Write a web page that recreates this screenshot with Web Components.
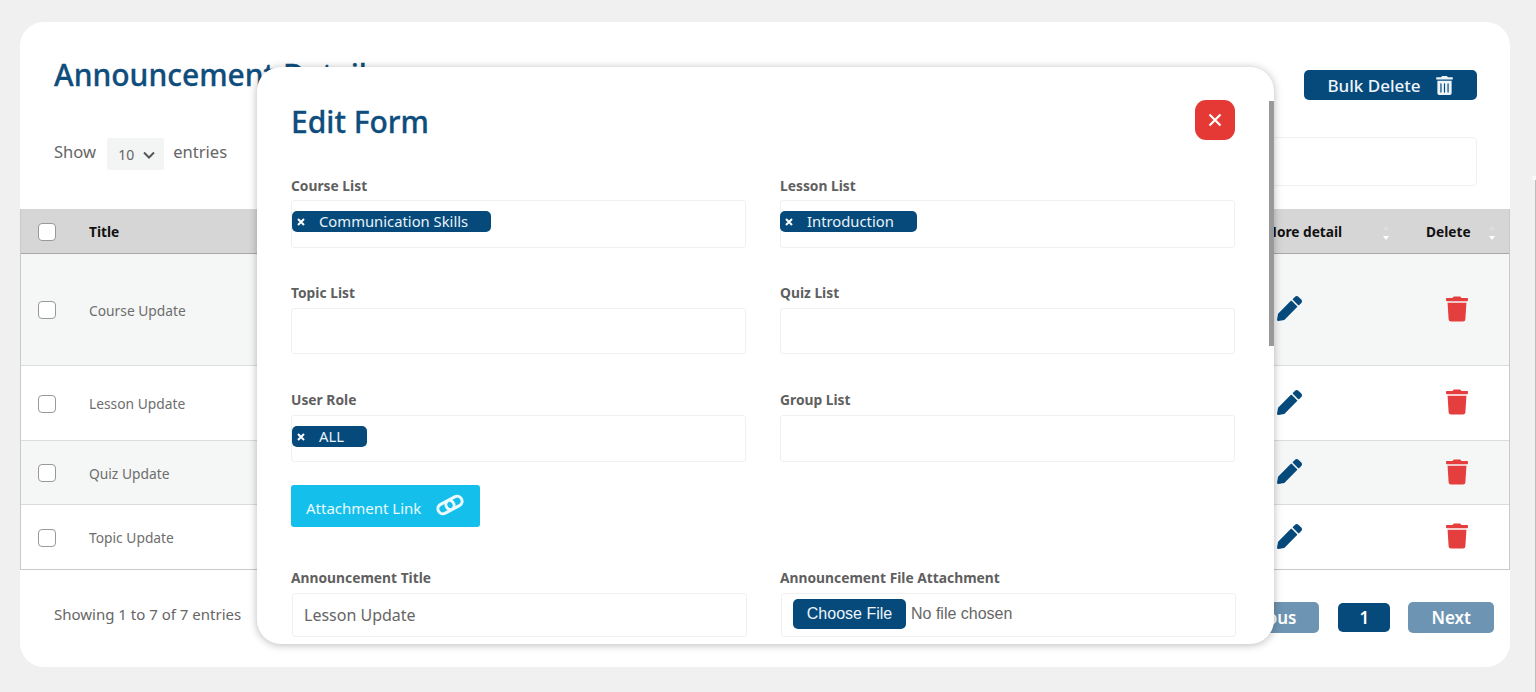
<!DOCTYPE html>
<html lang="en"><head><meta charset="utf-8"><title>Announcement Details</title>
<style>
html,body{margin:0;height:692px;overflow:hidden;background:#f0f0f0;font-family:"Noto Sans","Open Sans",sans-serif}
</style></head><body>
<ann-page>
  <ann-card>
    <ann-toolbar heading="Announcement Details"></ann-toolbar>
    <ann-table>
      <ann-row h="112" shade>Course Update</ann-row>
      <ann-row h="75">Lesson Update</ann-row>
      <ann-row h="64" shade>Quiz Update</ann-row>
      <ann-row h="64">Topic Update</ann-row>
    </ann-table>
    <ann-footer></ann-footer>
  </ann-card>
  <ann-modal heading="Edit Form">
    <ann-field label="Course List" h="48"><ann-chip>Communication Skills</ann-chip></ann-field>
    <ann-field label="Lesson List" h="48"><ann-chip style="margin-left:-1px">Introduction</ann-chip></ann-field>
    <ann-field label="Topic List" h="46" lm="5"></ann-field>
    <ann-field label="Quiz List" h="46" lm="5"></ann-field>
    <ann-field label="User Role" h="47" lm="5" class="r3"><ann-chip>ALL</ann-chip></ann-field>
    <ann-field label="Group List" h="47" lm="5" class="r3"></ann-field>
    <ann-link-button>Attachment Link</ann-link-button>
    <ann-field label="Announcement Title" h="44" lm="5" text="Lesson Update" nudge></ann-field>
    <ann-field label="Announcement File Attachment" h="44" lm="5" nudge><ann-file></ann-file></ann-field>
  </ann-modal>
  <ann-edge></ann-edge>
</ann-page>
<script>
const BLUE='#064a7c';
const TRASH='M432 32H312l-9.4-18.7A24 24 0 0 0 281.1 0H166.8a23.72 23.72 0 0 0-21.4 13.3L136 32H16A16 16 0 0 0 0 48v32a16 16 0 0 0 16 16h416a16 16 0 0 0 16-16V48a16 16 0 0 0-16-16zM53.2 467a48 48 0 0 0 47.9 45h245.8a48 48 0 0 0 47.9-45L416 128H32z';
const TRASH_ALT='M32 464a48 48 0 0 0 48 48h288a48 48 0 0 0 48-48V128H32zm272-256a16 16 0 0 1 32 0v224a16 16 0 0 1-32 0zm-96 0a16 16 0 0 1 32 0v224a16 16 0 0 1-32 0zm-96 0a16 16 0 0 1 32 0v224a16 16 0 0 1-32 0zM432 32H312l-9.4-18.7A24 24 0 0 0 281.1 0H166.8a23.72 23.72 0 0 0-21.4 13.3L136 32H16A16 16 0 0 0 0 48v32a16 16 0 0 0 16 16h416a16 16 0 0 0 16-16V48a16 16 0 0 0-16-16z';
const PEN='M497.9 142.1l-46.1 46.1c-4.7 4.7-12.3 4.7-17 0l-111-111c-4.7-4.7-4.7-12.3 0-17l46.1-46.1c18.7-18.7 49.1-18.7 67.9 0l60.1 60.1c18.8 18.7 18.8 49.1 0 67.9zM284.2 99.8L21.6 362.4.4 483.9c-2.9 16.4 11.4 30.6 27.8 27.8l121.5-21.3 262.6-262.6c4.7-4.7 4.7-12.3 0-17l-111-111c-4.8-4.7-12.4-4.7-17.1 0z';
function def(name,css,html,init){
  customElements.define(name,class extends HTMLElement{
    constructor(){super();this.attachShadow({mode:'open'});}
    connectedCallback(){
      this.shadowRoot.innerHTML='<style>'+css+'</style>'+(typeof html==='function'?html(this):html);
      if(init)init(this);
    }
  });
}
def('ann-page',':host{display:block;position:relative;padding:22px 26px 25px 20px;height:645px}','<slot></slot>');
def('ann-edge',`:host{position:absolute;left:1532px;top:176px;width:4px;height:516px}
.a{height:4px;background:#f8f8f8}.b{margin-left:3px;width:1px;height:512px;background:#bdbdbd}`,'<div class="a"></div><div class="b"></div>');
def('ann-card',':host{display:block;height:645px;background:#fff;border-radius:24px;overflow:hidden}','<slot></slot>');
def('ann-toolbar',`
:host{display:block;padding:31px 33px 23px 34px;color:#666}
.top{display:flex;justify-content:space-between;align-items:flex-start;height:47px;margin-bottom:37px}
h1{margin:0;font:500 30px/44px "Noto Sans",sans-serif;-webkit-text-stroke:.3px #0e4d7c;color:#0e4d7c}
button{all:unset;margin-top:17px;display:flex;align-items:center;justify-content:center;gap:15px;box-sizing:border-box;width:173px;height:30px;padding-right:1px;background:${BLUE};border-radius:5px;color:#eef5fa;font:500 17px "Noto Sans",sans-serif}
button svg{width:17px;height:19px;fill:#eef5fa}
.row{display:flex;justify-content:space-between;align-items:flex-start;height:49px}
.show{display:flex;align-items:flex-start;height:32px;margin-top:1px;font-size:16.6px;line-height:28px}
.sel{display:flex;align-items:center;justify-content:space-between;box-sizing:border-box;width:57px;height:32px;margin:0 9px 0 11px;padding:2px 9px 0 11px;background:#f3f4f4;font-size:14px;border-radius:2px}
.sel svg{width:12px;height:8px;fill:none;stroke:#555;stroke-width:2}
.search{width:260px;height:47px;border:1px solid #f0f0f0;border-radius:4px}
`,e=>`<div class="top"><h1>${e.getAttribute('heading')}</h1><button>Bulk Delete <svg viewBox="0 0 448 512"><path d="${TRASH_ALT}"/></svg></button></div>
<div class="row"><div class="show">Show<span class="sel">10<svg viewBox="0 0 12 8"><path d="M1 1.5l5 5 5-5"/></svg></span>entries</div><div class="search"></div></div>`);
def('ann-sort',`:host{display:flex;flex-direction:column;gap:6px;align-items:center;padding-top:1px}
i{display:block;width:0;height:0;border-left:3px solid transparent;border-right:3px solid transparent}
.u{border-bottom:4px solid #dedede}.d{border-top:4px solid #fff}`,'<i class="u"></i><i class="d"></i>');
def('ann-table',`
:host{display:block;border:solid #c9c9c9;border-width:0 1px 1px;margin:0}
.head{display:grid;grid-template-columns:68px 1175px 144px 1fr;height:44px;background:#d6d6d6;border-bottom:1px solid #a8a8a8;font:700 13.7px/44px "Noto Sans",sans-serif;color:#111}
.head>div{display:flex;align-items:center;padding-top:1px}
.chk{box-sizing:border-box;width:18px;height:18px;margin-left:17px;margin-top:-1px;background:#fff;border:1px solid #999;border-radius:4px}
.more{padding-right:19px;justify-content:space-between}
.del{padding-left:18px;padding-right:14px;justify-content:space-between}
`,`<div class="head"><div><span class="chk"></span></div><div>Title</div><div class="more">More detail<ann-sort></ann-sort></div><div class="del">Delete<ann-sort></ann-sort></div></div><slot></slot>`);
def('ann-row',`
:host{display:grid;grid-template-columns:68px 1175px 144px 1fr;align-items:center;box-sizing:border-box;padding-top:1px;border-bottom:1px solid #dcdcdc;font-size:13.8px;color:#6e6e6e}
:host(:last-child){border-bottom:0}
:host([shade]){background:#f5f6f6}
.chk{display:block;box-sizing:border-box;width:18px;height:18px;margin-left:17px;background:#fff;border:1px solid #999;border-radius:4px}
.pen{width:25px;height:25px;margin-left:13px;fill:${BLUE};display:block;margin-top:-3px}
.tr{width:22px;height:26px;margin-left:38px;fill:#e53e3e;display:block;margin-top:-3px}
`,e=>{e.style.height=e.getAttribute('h')+'px';return `<div><span class="chk"></span></div><div><slot></slot></div><svg class="pen" viewBox="0 0 512 512"><path d="${PEN}"/></svg><svg class="tr" viewBox="0 0 448 512"><path d="${TRASH}"/></svg>`});
def('ann-footer',`
:host{display:flex;justify-content:space-between;align-items:flex-start;padding:32px 16px 0 34px;height:32px;color:#666;font-size:15px}
.t{line-height:24px}
.pg{display:flex;gap:18px;align-items:center;height:31px}
span.b{display:flex;align-items:center;justify-content:center;box-sizing:border-box;height:31px;padding:0 23px;border-radius:5px;background:#6d94b2;color:#fff;font-weight:600;font-size:17px}
span.p{margin-right:1px}
span.c{background:${BLUE};height:29px;width:52px;padding:0}
`,`<div class="t">Showing 1 to 7 of 7 entries</div><div class="pg"><span class="b p">Previous</span><span class="b c">1</span><span class="b">Next</span></div>`);
def('ann-modal',`
:host{position:absolute;left:257px;top:67px;width:1017px;height:577px;background:#fff;border-radius:24px;overflow:hidden;box-shadow:0 1px 8px rgba(0,0,0,.28)}
.wrap{box-sizing:border-box;height:577px;padding:33px 39px 0 34px;overflow:hidden}
.top{display:flex;justify-content:space-between;height:40px;margin-bottom:36px}
h2{margin:0;font:500 30px/44px "Noto Sans",sans-serif;-webkit-text-stroke:.3px #0e4d7c;color:#0e4d7c}
.x{display:flex;align-items:center;justify-content:center;width:40px;height:40px;border-radius:11px;background:#e53935}
.x svg{width:14px;height:14px;stroke:#fff;stroke-width:2.2;fill:none}
.grid{display:grid;grid-template-columns:455px 455px;column-gap:34px;row-gap:35px}
::slotted(.r3){margin-top:1px}
.bar{position:absolute;right:0;top:34px;width:5px;height:245px;background:#999}
`,e=>`<div class="wrap"><div class="top"><h2>${e.getAttribute('heading')}</h2><span class="x"><svg viewBox="0 0 14 14"><path d="M1.5 1.5l11 11M12.5 1.5l-11 11"/></svg></span></div><div class="grid"><slot></slot></div></div><div class="bar"></div>`);
def('ann-field',`
:host{display:block}
label{display:block;font:700 13.8px/20px "Noto Sans",sans-serif;color:#5f5f5f}
.box{box-sizing:border-box;display:flex;align-items:flex-start;border:1px solid #f0f0f0;border-radius:3px;padding:10px 0 0 0;font-size:16px;color:#666}
:host([nudge]) .box{margin-left:1px;margin-right:-1px}
.t{padding:0 0 0 11px;display:block;line-height:24px;margin-top:-1px}
`,e=>{const t=e.getAttribute('text');const lm=e.getAttribute('lm')||4;return `<label style="margin-bottom:${lm}px">${e.getAttribute('label')}</label><div class="box" style="height:${e.getAttribute('h')}px">${t?`<span class="t">${t}</span>`:''}<slot></slot></div>`});
def('ann-chip',`
:host{display:inline-flex;align-items:center;height:21px;background:${BLUE};border-radius:5px;color:#e8f3fa;font-size:14.8px;padding:0 23px 0 5px}
span{display:block;margin-top:-1px}
svg{width:8px;height:8px;stroke:#fff;stroke-width:2;margin-right:14px;margin-top:1px}
`,`<svg viewBox="0 0 8 8"><path d="M1 1l6 6M7 1L1 7"/></svg><span><slot></slot></span>`);
def('ann-link-button',`
:host{grid-column:1/3;margin:-12px 0 6px;display:flex;justify-content:flex-start}
div{display:flex;align-items:center;box-sizing:border-box;width:189px;height:42px;padding:3px 0 0 15px;background:#14bfec;border-radius:3px;color:#eafaff;font-size:15px;white-space:nowrap}
svg{flex:none;width:30px;height:24px;margin-left:14px;margin-top:-5px;fill:none;stroke:#eafaff;stroke-width:3}
`,`<div><slot></slot><svg viewBox="0 0 30 24"><g transform="rotate(-28 15 12)"><rect x="2" y="7" width="17" height="10" rx="5"/><rect x="11" y="7" width="17" height="10" rx="5"/></g></svg></div>`);
def('ann-file',`
:host{display:flex;align-items:center;gap:5px;margin:-5px 0 0 11px;font:16px "Liberation Sans",sans-serif;color:#666}
b{display:flex;align-items:center;justify-content:center;width:113px;height:30px;border-radius:5px;background:${BLUE};color:#eef5fa;font-weight:400}
`,`<b>Choose File</b><span>No file chosen</span>`);
</script>
</body></html>
